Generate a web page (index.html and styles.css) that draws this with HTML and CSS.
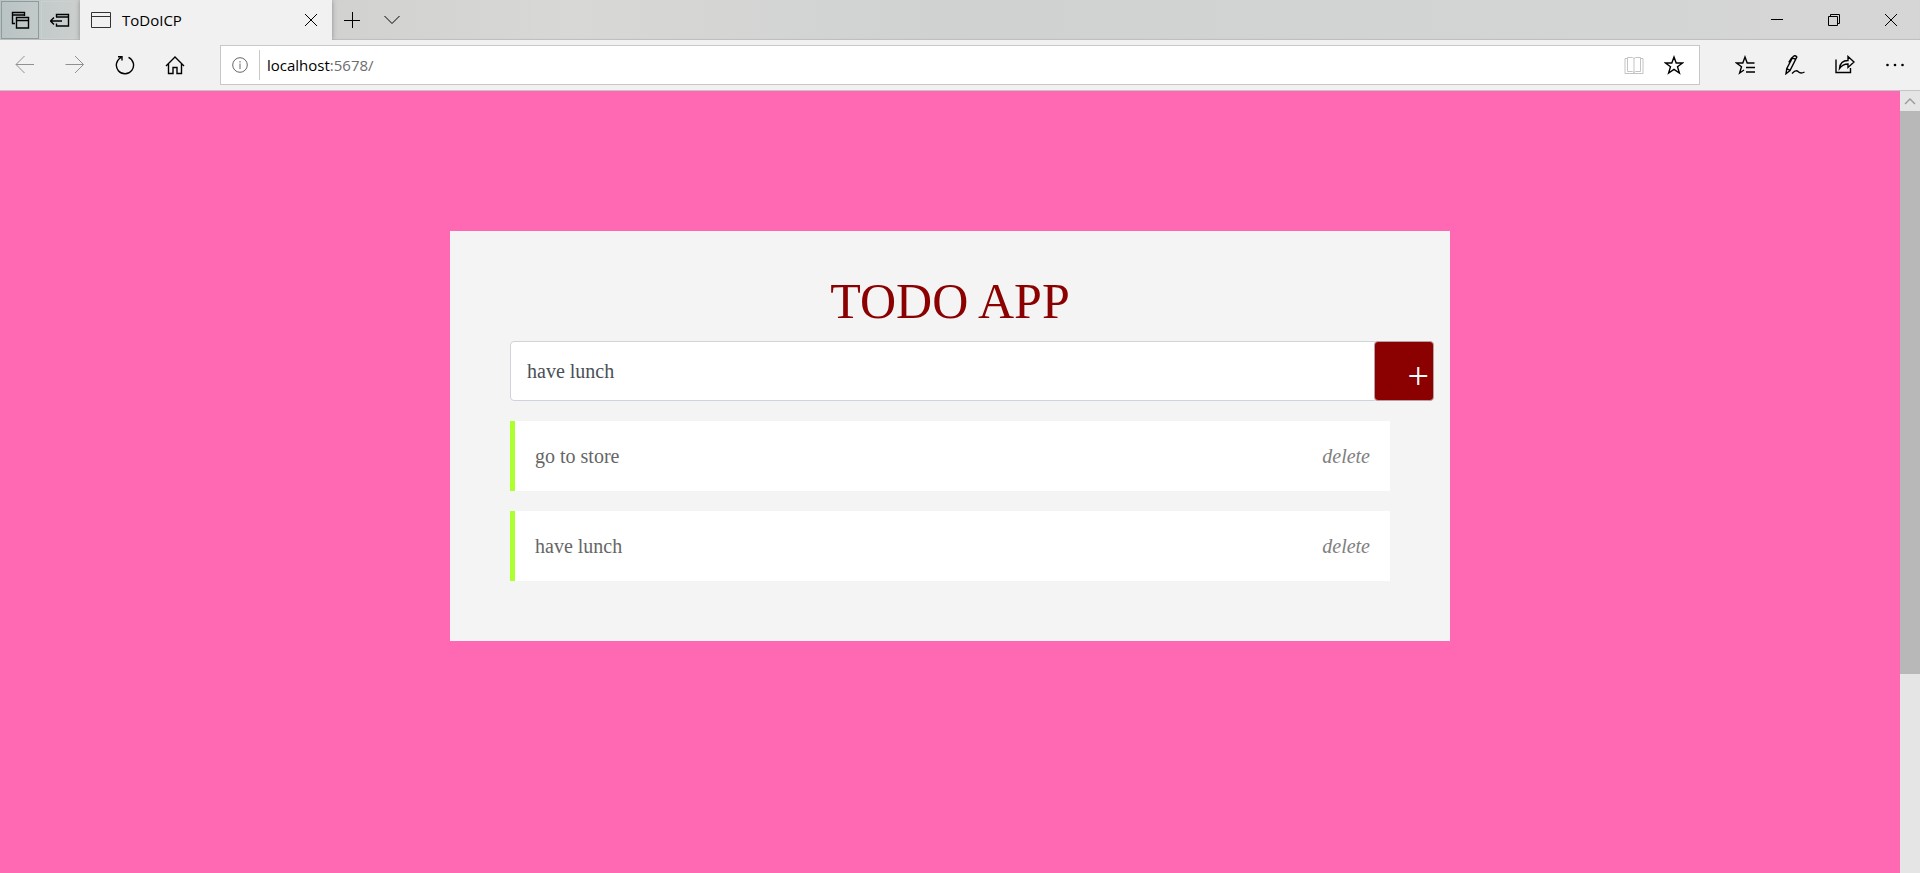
FILE: index.html
```html
<!DOCTYPE html>
<html lang="en">
<head>
<meta charset="utf-8">
<title>ToDoICP</title>
<link rel="stylesheet" href="styles.css">
</head>
<body>
<div class="browser">
  <header class="tabbar">
    <button class="tab-tool tab-tool-active" aria-label="Tabs set aside">
      <svg width="20" height="20" viewBox="0 0 20 20"><path d="M5 13.500H2.500V2.500h12V6M2 5h13"/><path d="M6.500 7.500h12v10.500h-12zM6 10.500h13"/></svg>
    </button>
    <button class="tab-tool" aria-label="Set tabs aside">
      <svg width="20" height="20" viewBox="0 0 20 20"><path d="M6.500 7V4.500h12v11.500h-12V13.500M6 7h13M0.500 11H12M4 7.500L0.500 11L4 14.500"/></svg>
    </button>
    <div class="tab">
      <svg class="tab-icon" width="22" height="18" viewBox="0 0 22 18"><path d="M1.500 1.500h19v15h-19zM1 5.500h20"/></svg>
      <span class="tab-title">ToDoICP</span>
      <button class="tab-close" aria-label="Close tab"><svg width="14" height="14" viewBox="0 0 14 14"><path d="M1 1l12 12M13 1L1 13"/></svg></button>
    </div>
    <button class="tab-action" aria-label="New tab"><svg width="16" height="16" viewBox="0 0 16 16"><path d="M0 8.500h16M8.500 0v16"/></svg></button>
    <button class="tab-action" aria-label="Show tab previews"><svg width="16" height="16" viewBox="0 0 16 16"><path d="M.5 4l7.500 7.500L15.500 4"/></svg></button>
    <div class="window-controls">
      <button class="window-button" aria-label="Minimize"><svg width="12" height="12" viewBox="0 0 12 12"><path d="M0 5.500h12"/></svg></button>
      <button class="window-button" aria-label="Restore"><svg width="12" height="12" viewBox="0 0 12 12"><path d="M.5 2.500h9v9h-9zM2.500 2.500v-2h9v9h-2"/></svg></button>
      <button class="window-button" aria-label="Close"><svg width="12" height="12" viewBox="0 0 12 12"><path d="M0 0l12 12M12 0L0 12"/></svg></button>
    </div>
  </header>

  <nav class="toolbar">
    <button class="tool tool-muted" aria-label="Back"><svg width="20" height="20" viewBox="0 0 20 20"><path d="M1 9.500h18M9.500 1L1 9.500L9.500 18"/></svg></button>
    <button class="tool tool-muted" aria-label="Forward"><svg width="20" height="20" viewBox="0 0 20 20"><path d="M0.500 9.500h18M10 1l8.500 8.500L10 18"/></svg></button>
    <button class="tool" aria-label="Refresh"><svg width="20" height="20" viewBox="0 0 20 20"><path class="bold" d="M13.500 2.300A8.600 8.600 0 1 1 6 2.500M3 1.700H7V5.500"/></svg></button>
    <button class="tool" aria-label="Home"><svg width="20" height="20" viewBox="0 0 20 20"><path class="bold" d="M1 11L10 2l9 9M3.500 9v9.500H8v-6h4v6h4.500V9"/></svg></button>
    <div class="address">
      <button class="site-info" aria-label="Site information"><svg width="16" height="16" viewBox="0 0 16 16"><circle cx="8" cy="8" r="7.300"/><path d="M8 6.500V12M8 4v1.500"/></svg></button>
      <a class="url" href="#">localhost<span class="url-rest">:5678/</span></a>
      <button class="address-tool address-tool-muted" aria-label="Reading view"><svg width="20" height="20" viewBox="0 0 20 20"><path d="M3.500 3.500h-2.500v15h18v-15h-2.500M10 3v14.500M3.500 2.500h5l1.500 1 1.500-1h5V16.500h-5l-1.500 1-1.500-1h-5z"/></svg></button>
      <button class="address-tool" aria-label="Add to favorites"><svg width="20" height="20" viewBox="0 0 20 20"><path class="bold" d="M10 2l2.200 6h6.300l-5 3.800 1.900 6.200L10 14.300 4.600 18l1.900-6.200-5-3.800h6.300z"/></svg></button>
    </div>
    <button class="tool" aria-label="Favorites"><svg width="20" height="20" viewBox="0 0 20 20"><path class="bold" d="M19.500 8h-7.300L10 2 7.800 8H1.500l5 3.800L4.600 18l4.400-3M11 12.500h9M11 17h9"/></svg></button>
    <button class="tool" aria-label="Add notes"><svg width="20" height="20" viewBox="0 0 20 20"><path class="bold" d="M1 18.700l.8-5.200L8.200 1.500q2-1.500 3.600.5L5 15.500zM7.500 2.800l3.500 1.700M1.800 13.500L5 15.500M3.800 7.500l3.200-5M7 18.500c3-3 4.500-3.500 6-2s3 2.500 6.500.5"/></svg></button>
    <button class="tool" aria-label="Share"><svg width="20" height="20" viewBox="0 0 20 20"><path class="bold" d="M1 4.500v13h14.500V13M4.500 13.500c.5-6 3.500-8 8.500-8V1.500L19 7l-6 5.500V9c-4 0-6 1-8.500 4.500z"/></svg></button>
    <button class="tool" aria-label="Settings and more"><svg width="20" height="20" viewBox="0 0 20 20"><g class="dots"><circle cx="2.500" cy="10" r="1.300"/><circle cx="10" cy="10" r="1.300"/><circle cx="17.500" cy="10" r="1.300"/></g></svg></button>
  </nav>

  <div class="viewport">
    <main class="page">
      <section class="card">
        <h1 class="title">TODO APP</h1>
        <form class="entry">
          <input class="entry-text" type="text" aria-label="New task" value="have lunch">
          <button class="entry-add" type="button" aria-label="Add task">+</button>
        </form>
        <ul class="tasks">
          <li class="task"><span>go to store</span><button class="delete">delete</button></li>
          <li class="task"><span>have lunch</span><button class="delete">delete</button></li>
        </ul>
      </section>
    </main>
    <div class="scrollbar">
      <button class="scroll-up" aria-label="Scroll up"><svg width="12" height="8" viewBox="0 0 12 8"><path class="bold" d="M1 7l5-5 5 5"/></svg></button>
      <div class="scroll-thumb"></div>
    </div>
  </div>
</div>
</body>
</html>
```
FILE: styles.css
```css
* {
  box-sizing: border-box;
}

body {
  margin: 0;
  font-family: "Open Sans", sans-serif;
  font-size: 15px;
  color: #000;
}

button {
  display: flex;
  align-items: center;
  justify-content: center;
  margin: 0;
  padding: 0;
  border: 0;
  background: none;
  color: inherit;
  font: inherit;
}

svg {
  display: block;
  flex: none;
  fill: none;
  stroke: currentColor;
  stroke-width: 1;
}

.bold {
  stroke-width: 1.4;
}

.dots {
  fill: currentColor;
  stroke: none;
}

.browser {
  display: flex;
  flex-direction: column;
  height: 100vh;
}

.tabbar {
  display: flex;
  height: 40px;
  background: linear-gradient(to right, #b9c3c4 0, #ccd0cf 80px, #d3d3d1 400px, #d8d8d6 30%, #cfd2d1 50%, #d2d5d3 80%, #d6d6d6);
  box-shadow: inset 0 -1px 1px #bdbdbd;
}

.tab-tool {
  width: 38px;
  height: 38px;
  margin: 1px;
  border: 1px solid #cbd0d0;
}

.tab-tool svg {
  stroke-width: 1.4;
}

.tab-tool-active {
  border-color: #8f9b9b;
}

.tab {
  display: flex;
  align-items: center;
  width: 252px;
  padding: 0 14px 0 10px;
  background: #f1f1f1;
  box-shadow: 0 0 5px #8a8a8a;
  clip-path: inset(0 -6px);
}

.tab-icon {
  color: #333;
}

.tab-title {
  flex: 1;
  margin-left: 10px;
}

.tab-action {
  width: 40px;
}

.window-controls {
  display: flex;
  margin-left: auto;
  padding-right: 1px;
}

.window-button {
  width: 57px;
}

.toolbar {
  display: flex;
  align-items: center;
  height: 51px;
  border-bottom: 1px solid #c4c4c4;
  background: #f1f1f1;
}

.tool {
  width: 50px;
  height: 50px;
}

.tool-muted {
  color: #909090;
}

.address {
  display: flex;
  flex: 1;
  align-items: center;
  height: 40px;
  margin: 0 20px;
  padding-right: 5px;
  border: 1px solid #c8c8c8;
  background: #fff;
}

.site-info {
  width: 39px;
  height: 30px;
  border-right: 1px solid #c8c8c8;
  color: #666;
}

.url {
  flex: 1;
  margin-left: 7px;
  color: #000;
  text-decoration: none;
}

.url-rest {
  color: #6d6d6d;
}

.address-tool {
  width: 40px;
  height: 38px;
}

.address-tool-muted {
  color: #c4c4c4;
}

.viewport {
  display: flex;
  flex: 1;
  min-height: 0;
}

.page {
  flex: 1;
  padding: 140px 20px 0;
  background: #ff69b4;
  font-family: "Liberation Serif", serif;
  font-size: 20px;
}

.card {
  max-width: 1000px;
  margin: 0 auto;
  padding: 40px 60px 60px;
  background: #f4f4f4;
}

.title {
  margin: 0 0 10px;
  color: #8b0000;
  font-size: 50px;
  font-weight: 400;
  line-height: 60px;
  text-align: center;
}

.entry {
  display: flex;
  height: 60px;
  margin-right: -44px;
}

.entry-text {
  flex: 1;
  min-width: 0;
  margin-right: -4px;
  padding: 0 16px;
  border: 1px solid #ced4da;
  border-radius: 4px;
  background: #fff;
  color: #495057;
  font: inherit;
}

.entry-add {
  position: relative;
  justify-content: flex-end;
  width: 60px;
  padding: 10px 4px 0 0;
  border: 1px solid #b9a0a5;
  border-radius: 4px;
  background: #8b0000;
  color: #fff;
  font-size: 38px;
}

.tasks {
  display: grid;
  gap: 20px;
  margin: 20px 0 0;
  padding: 0;
  list-style: none;
}

.task {
  display: flex;
  align-items: center;
  justify-content: space-between;
  height: 70px;
  padding: 0 20px;
  border-left: 5px solid #adff2f;
  background: #fff;
  color: #666;
}

.delete {
  color: #808080;
  font-style: italic;
}

.scrollbar {
  display: grid;
  grid-template-rows: 20px 563fr 199fr;
  width: 20px;
  background: #e5e5e5;
}

.scroll-up {
  color: #999;
}

.scroll-thumb {
  background: #b8b8b8;
}
```
